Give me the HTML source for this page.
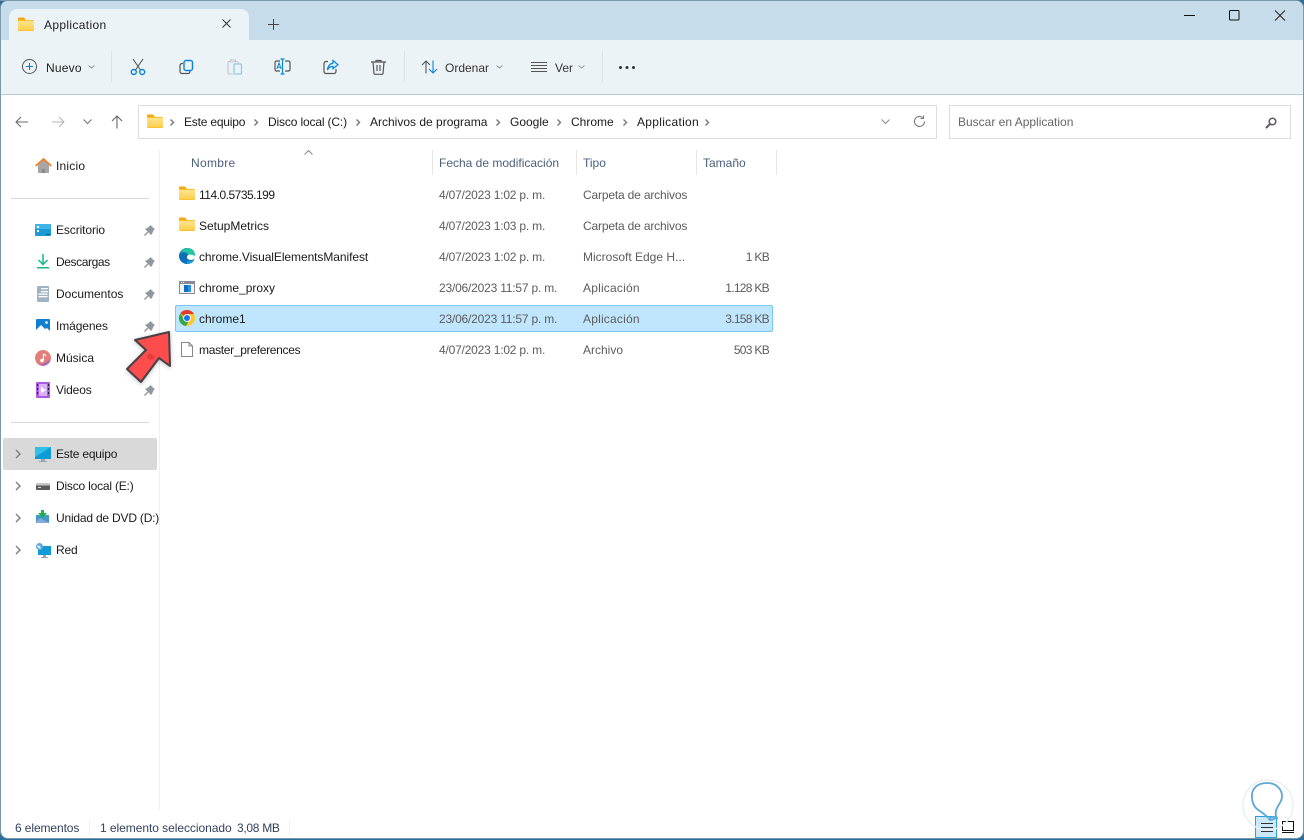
<!DOCTYPE html>
<html><head><meta charset="utf-8"><style>
html,body{margin:0;padding:0;width:1304px;height:840px;overflow:hidden;background:#fff}
body{font-family:"Liberation Sans",sans-serif;font-size:12px;color:#1a1a1a;position:relative}
.t{position:absolute;white-space:nowrap;line-height:16px;height:16px}
.g{color:#5c5c5c}
.r{text-align:right}
.a{position:absolute}
svg{position:absolute;overflow:visible}
</style></head><body>
<svg width="0" height="0" style="position:absolute"><defs>
<linearGradient id="fg" x1="0" y1="0" x2="0" y2="1"><stop offset="0" stop-color="#fee38d"/><stop offset="1" stop-color="#fdd050"/></linearGradient>
<g id="fold"><path d="M0 2a1.500 1.500 0 0 1 1.500-1.500H6l2 2.500v2H0z" fill="#f5a70f"/><rect x="0" y="3" width="16" height="11" rx="1" fill="#fbc02d"/><rect x="0" y="4" width="16" height="9" fill="url(#fg)"/></g>
<path id="pin" d="M6.500 0L11 4.500 9.600 5.300 8 9 7 10 4.600 7.400 1 11 0 10 3.600 6.400 1 4 4.800 2z" fill="#90989e"/>
<path id="chev" d="M1 1l4 4-4 4" fill="none" stroke="#7d7d7d" stroke-width="1.400"/>
<path id="bc" d="M0.500 0.500L3.500 3.500 0.500 6.500" fill="none" stroke="#777" stroke-width="1.400"/>
<path id="dn" d="M0.500 0.500L3.500 3 6.500 0.500" fill="none" stroke="#9a9a9a" stroke-width="1"/>
</defs></svg>

<!-- window frame -->
<div class="a" style="left:0;top:0;width:1304px;height:840px;background:#2a6f9c"></div>
<div class="a" style="left:0;top:0;width:860px;height:1px;background:#7d97a9"></div>
<div class="a" style="left:860px;top:0;width:210px;height:1px;background:#0a86c6"></div>
<div class="a" style="left:0;top:0;width:1304px;height:839px;background:#fff;border-radius:8px;border:1px solid #7b97aa;box-sizing:border-box"></div>

<!-- title bar + toolbar -->
<div class="a" style="left:1px;top:1px;width:1302px;height:39px;background:#c7dcea;border-radius:7px 7px 0 0"></div>
<div class="a" style="left:1px;top:40px;width:1302px;height:54px;background:#ecf3f7;border-bottom:1px solid #b4cbdc"></div>
<div class="a" style="left:9px;top:9px;width:240px;height:32px;background:#ecf3f7;border-radius:8px 8px 0 0"></div>
<svg style="left:18px;top:17px" width="16" height="14"><use href="#fold"/></svg>
<div class="t" style="left:44px;top:17px;color:#222;letter-spacing:.35px">Application</div>
<svg style="left:222px;top:19px" width="10" height="10"><path d="M0.500 0.500l8 8M8.500 0.500l-8 8" stroke="#333" stroke-width="1"/></svg>
<svg style="left:268px;top:19px" width="11" height="11"><path d="M5.500 0v11M0 5.500h11" stroke="#444" stroke-width="1"/></svg>

<svg style="left:1184px;top:10px" width="110" height="16"><path d="M0 5.500h11" stroke="#111" stroke-width="1"/><rect x="45.500" y="0.500" width="9.500" height="9.500" rx="1" fill="none" stroke="#111" stroke-width="1"/><path d="M91 .5l10 10M101 .5l-10 10" stroke="#222" stroke-width="1"/></svg>

<!-- toolbar items -->
<svg style="left:22px;top:59px" width="16" height="16"><circle cx="7.500" cy="7.500" r="7" fill="none" stroke="#555" stroke-width="1"/><path d="M7.500 4v7M4 7.500h7" stroke="#0a78d4" stroke-width="1"/></svg>
<div class="t" style="left:46px;top:60px;color:#222;letter-spacing:.2px">Nuevo</div>
<svg style="left:88px;top:65px" width="7" height="5"><use href="#dn"/></svg>
<div class="a" style="left:111px;top:51px;width:1px;height:31px;background:#dde3e7"></div>
<svg style="left:130px;top:58px" width="16" height="18"><path d="M3 1l7.500 11M13 1L5.500 12" stroke="#555" stroke-width="1.100" fill="none"/><circle cx="3.800" cy="14" r="2.500" fill="none" stroke="#0a84d8" stroke-width="1.400"/><circle cx="12.200" cy="14" r="2.500" fill="none" stroke="#0a84d8" stroke-width="1.400"/></svg>
<svg style="left:179px;top:60px" width="16" height="16"><path d="M4 3.500H3A2 2 0 0 0 1 5.500v6A2 2 0 0 0 3 13.500h6a2 2 0 0 0 2-2V11" fill="none" stroke="#555" stroke-width="1.200"/><rect x="5" y="0.500" width="8.500" height="10" rx="2" fill="none" stroke="#0a84d8" stroke-width="1.400"/></svg>
<svg style="left:227px;top:59px" width="16" height="16"><path d="M3 2.500H2a1 1 0 0 0-1 1V14a1 1 0 0 0 1 1h4" fill="none" stroke="#c2c6c9" stroke-width="1.100"/><path d="M3.500 1h5v2h-5z" fill="none" stroke="#c2c6c9"/><path d="M9 2.500h1a1 1 0 0 1 1 1V5" fill="none" stroke="#c2c6c9"/><rect x="7" y="5" width="7.500" height="10" rx="1" fill="none" stroke="#8fc6e8" stroke-width="1.200"/></svg>
<svg style="left:274px;top:58px" width="17" height="18"><path d="M6 3H2.500A1.500 1.500 0 0 0 1 4.500v7A1.500 1.500 0 0 0 2.500 13H6M11 3h3.500A1.500 1.500 0 0 1 16 4.500v7a1.500 1.500 0 0 1-1.500 1.500H11" fill="none" stroke="#555" stroke-width="1.200"/><path d="M8.500 1v15M6.500 1h4M6.500 16h4" stroke="#0a84d8" stroke-width="1.200" fill="none"/><path d="M2.800 11L5 5l2.200 6M3.600 9.200h2.800" stroke="#0a84d8" stroke-width="1" fill="none"/></svg>
<svg style="left:323px;top:60px" width="16" height="15"><path d="M5 1.500H3A2 2 0 0 0 1 3.500v8A2 2 0 0 0 3 13.500h8a2 2 0 0 0 2-2V9" fill="none" stroke="#555" stroke-width="1.200"/><path d="M10 0.500l5 4.200-5 4V6.500C7.500 6.500 5.500 7.500 4.500 10 4.500 6.500 7 3.500 10 3z" fill="#d8ebf8" stroke="#0a84d8" stroke-width="1.200"/></svg>
<svg style="left:371px;top:59px" width="15" height="16"><path d="M0 3h15M5 3V1.500h5V3M2 3l1 11.500a1 1 0 0 0 1 .8h7a1 1 0 0 0 1-.8L13 3M6 6v6M9 6v6" fill="none" stroke="#555" stroke-width="1.200"/></svg>
<div class="a" style="left:404px;top:51px;width:1px;height:31px;background:#dde3e7"></div>
<svg style="left:421px;top:60px" width="17" height="14"><path d="M5 13.500V1M1 5l4-4 4 4" fill="none" stroke="#555" stroke-width="1.100"/><path d="M12 0.500V13M8 9l4 4 4-4" fill="none" stroke="#0a84d8" stroke-width="1.100"/></svg>
<div class="t" style="left:445px;top:60px;color:#333">Ordenar</div>
<svg style="left:496px;top:65px" width="7" height="5"><use href="#dn"/></svg>
<svg style="left:531px;top:62px" width="16" height="10"><path d="M0 .5h16M0 3.500h16M0 6.500h16M0 9.500h16" stroke="#555" stroke-width="1"/></svg>
<div class="t" style="left:555px;top:60px;color:#333">Ver</div>
<svg style="left:578px;top:65px" width="7" height="5"><use href="#dn"/></svg>
<div class="a" style="left:602px;top:51px;width:1px;height:31px;background:#dde3e7"></div>
<svg style="left:619px;top:66px" width="16" height="3"><circle cx="1.500" cy="1.500" r="1.500" fill="#333"/><circle cx="8" cy="1.500" r="1.500" fill="#333"/><circle cx="14.500" cy="1.500" r="1.500" fill="#333"/></svg>

<!-- nav -->
<svg style="left:15px;top:116px" width="14" height="12"><path d="M13 6H1M6 1L1 6l5 5" fill="none" stroke="#6a6a6a" stroke-width="1.100"/></svg>
<svg style="left:51px;top:116px" width="14" height="12"><path d="M1 6h12M8 1l5 5-5 5" fill="none" stroke="#b4b4b4" stroke-width="1.100"/></svg>
<svg style="left:83px;top:119px" width="9" height="6"><path d="M.5 .5L4.500 4.500 8.500 .5" fill="none" stroke="#777" stroke-width="1.100"/></svg>
<svg style="left:111px;top:115px" width="12" height="14"><path d="M6 13.500V1M1 6l5-5 5 5" fill="none" stroke="#666" stroke-width="1.100"/></svg>

<!-- address -->
<div class="a" style="left:138px;top:105px;width:799px;height:34px;border:1px solid #dcdcdc;box-sizing:border-box;background:#fff"></div>
<svg style="left:147px;top:114px" width="16" height="14"><use href="#fold"/></svg>
<svg style="left:170px;top:119px" width="5" height="7"><use href="#bc"/></svg>
<div class="t" style="left:184px;top:114px;letter-spacing:-.2px">Este equipo</div>
<svg style="left:254px;top:119px" width="5" height="7"><use href="#bc"/></svg>
<div class="t" style="left:268px;top:114px;letter-spacing:-.15px">Disco local (C:)</div>
<svg style="left:356px;top:119px" width="5" height="7"><use href="#bc"/></svg>
<div class="t" style="left:370px;top:114px">Archivos de programa</div>
<svg style="left:496px;top:119px" width="5" height="7"><use href="#bc"/></svg>
<div class="t" style="left:510px;top:114px">Google</div>
<svg style="left:557px;top:119px" width="5" height="7"><use href="#bc"/></svg>
<div class="t" style="left:571px;top:114px">Chrome</div>
<svg style="left:623px;top:119px" width="5" height="7"><use href="#bc"/></svg>
<div class="t" style="left:637px;top:114px;letter-spacing:.3px">Application</div>
<svg style="left:705px;top:119px" width="5" height="7"><use href="#bc"/></svg>
<svg style="left:881px;top:119px" width="9" height="6"><path d="M.5 .5L4.500 4.500 8.500 .5" fill="none" stroke="#8a8a8a" stroke-width="1"/></svg>
<svg style="left:913px;top:115px" width="13" height="13"><path d="M11.500 6.500a5 5 0 1 1-1.800-3.900" fill="none" stroke="#7d7d7d" stroke-width="1.100"/><path d="M10.500 0.500v3h-3" fill="none" stroke="#7d7d7d" stroke-width="1.100"/></svg>

<!-- search -->
<div class="a" style="left:949px;top:105px;width:342px;height:34px;border:1px solid #dcdcdc;box-sizing:border-box;background:#fff"></div>
<div class="t" style="left:958px;top:114px;color:#666">Buscar en Application</div>
<svg style="left:1265px;top:117px" width="12" height="12"><circle cx="7.500" cy="4.500" r="3.300" fill="none" stroke="#5e5a60" stroke-width="1.500"/><path d="M5 7L1 11" stroke="#5e5a60" stroke-width="2"/></svg>

<!-- sidebar -->
<svg style="left:35px;top:158px" width="17" height="16"><path d="M3 7v8h11V7L8.500 2z" fill="#a6a6a6"/><path d="M7 15v-4h3v4z" fill="#8a8a8a"/><path d="M.7 8L8.500 1 16.300 8" fill="none" stroke="#f27a1a" stroke-width="1.600"/></svg>
<div class="t" style="left:56px;top:158px;letter-spacing:.2px">Inicio</div>
<div class="a" style="left:11px;top:198px;width:138px;height:1px;background:#d9d9d9"></div>

<svg style="left:35px;top:224px" width="16" height="12"><rect width="16" height="12" rx="1" fill="#1b9ad6"/><rect x="0" y="0" width="16" height="5" fill="#3fb4e6"/><rect x="2" y="2" width="2" height="2" fill="#fff"/><rect x="2" y="6" width="2" height="2" fill="#fff"/><rect x="11" y="10" width="4" height="1" fill="#0b5f8f"/></svg>
<div class="t" style="left:56px;top:222px;letter-spacing:-.1px">Escritorio</div>
<svg style="left:144px;top:225px" width="11" height="11"><use href="#pin"/></svg>

<svg style="left:37px;top:254px" width="12" height="15"><path d="M6 0v10M1.500 6L6 10.500 10.500 6" fill="none" stroke="#12b886" stroke-width="1.500"/><rect x="0" y="13" width="12" height="1.500" fill="#12b886"/></svg>
<div class="t" style="left:56px;top:254px;letter-spacing:-.4px">Descargas</div>
<svg style="left:144px;top:257px" width="11" height="11"><use href="#pin"/></svg>

<svg style="left:37px;top:286px" width="12" height="16"><rect width="12" height="16" rx="1" fill="#9fb3c4"/><rect x="4" y="2" width="7" height="1.300" fill="#fff"/><rect x="4" y="5" width="7" height="1.300" fill="#fff"/><rect x="1.500" y="7.500" width="9" height="1.300" fill="#fff"/><rect x="1.500" y="10" width="9" height="1.300" fill="#fff"/></svg>
<div class="t" style="left:56px;top:286px">Documentos</div>
<svg style="left:144px;top:289px" width="11" height="11"><use href="#pin"/></svg>

<svg style="left:36px;top:319px" width="14" height="14"><rect width="14" height="14" rx="1" fill="#0f7fd0"/><path d="M0 11l5-5 4 4 2-1 3 3v2H0z" fill="#fff"/><circle cx="10.500" cy="3.500" r="1.300" fill="#fff"/></svg>
<div class="t" style="left:56px;top:318px;letter-spacing:-.1px">Imágenes</div>
<svg style="left:144px;top:321px" width="11" height="11"><use href="#pin"/></svg>

<svg style="left:35px;top:350px" width="16" height="16"><circle cx="8" cy="8" r="8" fill="#e27f79"/><path d="M4 14.500Q9 14 15 9.500 15 13 11 15 7 16.500 4 14.500z" fill="#a66bc0"/><path d="M8.500 4v6" stroke="#fff" stroke-width="1.200"/><circle cx="7" cy="10.500" r="1.800" fill="#fff"/><path d="M8.500 4q2 .5 2.500 2" stroke="#fff" fill="none"/></svg>
<div class="t" style="left:56px;top:350px">Música</div>

<svg style="left:36px;top:382px" width="14" height="16"><rect width="14" height="16" rx="1" fill="#a85ce0"/><rect x="3" y="2" width="8" height="12" fill="#d9b3f5"/><path d="M5 5l5 3-5 3z" fill="#fff"/><rect x="1" y="2" width="1" height="2" fill="#2b1247"/><rect x="1" y="6" width="1" height="2" fill="#2b1247"/><rect x="1" y="10" width="1" height="2" fill="#2b1247"/><rect x="12" y="2" width="1" height="2" fill="#2b1247"/><rect x="12" y="6" width="1" height="2" fill="#2b1247"/><rect x="12" y="10" width="1" height="2" fill="#2b1247"/></svg>
<div class="t" style="left:56px;top:382px;letter-spacing:-.15px">Videos</div>
<svg style="left:144px;top:385px" width="11" height="11"><use href="#pin"/></svg>

<div class="a" style="left:11px;top:422px;width:138px;height:1px;background:#d9d9d9"></div>
<div class="a" style="left:3px;top:438px;width:154px;height:32px;background:#d9d9d9;border-radius:2px"></div>
<svg style="left:15px;top:449px" width="6" height="10"><use href="#chev"/></svg>
<svg style="left:35px;top:447px" width="16" height="16"><rect width="16" height="12" fill="#0f9bd7"/><path d="M0 0h16L0 10z" fill="#31c0e8"/><rect x="6" y="12" width="4" height="2" fill="#9aa5ad"/><rect x="4" y="14" width="8" height="1" fill="#9aa5ad"/></svg>
<div class="t" style="left:56px;top:446px;letter-spacing:-.2px">Este equipo</div>

<svg style="left:15px;top:481px" width="6" height="10"><use href="#chev"/></svg>
<svg style="left:36px;top:483px" width="14" height="7"><rect y="1" width="14" height="6" rx="1" fill="#5b5b5b"/><rect y="0" width="14" height="2.500" rx="1" fill="#c7c7c7"/><rect x="2" y="4" width="3" height="1" fill="#ddd"/></svg>
<div class="t" style="left:56px;top:478px;letter-spacing:-.2px">Disco local (E:)</div>

<svg style="left:15px;top:513px" width="6" height="10"><use href="#chev"/></svg>
<svg style="left:36px;top:510px" width="13" height="14"><path d="M0 5h13v8H0z" fill="#3f9cc9"/><path d="M0 12l4-4 9 5H0z" fill="#8ad"/><path d="M5 0h3v3h3L6.500 8 2 3h3z" fill="#21b14b"/></svg>
<div class="t" style="left:56px;top:510px;letter-spacing:-.2px">Unidad de DVD (D:)</div>

<svg style="left:15px;top:545px" width="6" height="10"><use href="#chev"/></svg>
<svg style="left:35px;top:543px" width="16" height="15"><rect x="3" y="3" width="13" height="9" fill="#0f9bd7"/><rect x="8" y="12" width="3" height="2" fill="#9aa5ad"/><rect x="6" y="14" width="7" height="1" fill="#9aa5ad"/><circle cx="4.500" cy="3.500" r="3.500" fill="#5aa9d9"/><path d="M2 2l3 1 1 3-3-1z" fill="#d8eef8"/></svg>
<div class="t" style="left:56px;top:542px;letter-spacing:-.2px">Red</div>

<div class="a" style="left:159px;top:150px;width:1px;height:660px;background:#f0f0f0"></div>

<!-- column headers -->
<svg style="left:304px;top:150px" width="9" height="5"><path d="M.5 4.500L4.500 .5 8.500 4.500" fill="none" stroke="#8a8a8a" stroke-width="1"/></svg>
<div class="t" style="left:191px;top:155px;color:#4c607a;letter-spacing:.3px">Nombre</div>
<div class="a" style="left:432px;top:150px;width:1px;height:25px;background:#e5e5e5"></div>
<div class="t" style="left:439px;top:155px;color:#4c607a">Fecha de modificación</div>
<div class="a" style="left:576px;top:150px;width:1px;height:25px;background:#e5e5e5"></div>
<div class="t" style="left:583px;top:155px;color:#4c607a">Tipo</div>
<div class="a" style="left:696px;top:150px;width:1px;height:25px;background:#e5e5e5"></div>
<div class="t" style="left:703px;top:155px;color:#4c607a">Tamaño</div>
<div class="a" style="left:776px;top:150px;width:1px;height:25px;background:#e5e5e5"></div>

<!-- selected row -->
<div class="a" style="left:175px;top:305px;width:598px;height:27px;background:#bfe6fc;border:1px solid #78c8f5;box-sizing:border-box;border-radius:2px"></div>

<!-- rows -->
<svg style="left:179px;top:186px" width="16" height="14"><use href="#fold"/></svg>
<div class="t" style="left:199px;top:187px;letter-spacing:-.5px">114.0.5735.199</div>
<div class="t g" style="left:439px;top:187px;letter-spacing:-.2px">4/07/2023 1:02 p. m.</div>
<div class="t g" style="left:583px;top:187px;letter-spacing:-.17px">Carpeta de archivos</div>

<svg style="left:179px;top:217px" width="16" height="14"><use href="#fold"/></svg>
<div class="t" style="left:199px;top:218px">SetupMetrics</div>
<div class="t g" style="left:439px;top:218px;letter-spacing:-.2px">4/07/2023 1:03 p. m.</div>
<div class="t g" style="left:583px;top:218px;letter-spacing:-.17px">Carpeta de archivos</div>

<svg style="left:179px;top:248px" width="16" height="16"><circle cx="8" cy="8" r="8" fill="#0c6fb8"/><path d="M1 6C2 2 6 0 9 0c4 0 7 3 7 7 0 2-2 3-4 3H8c0-2 1-2 1-3S7 4 5 4 2 5 1 6z" fill="#27c4a0"/><path d="M8 9c0-2 3-3 5-2 2 0 3 1 3 2 0 1-1 3-4 3-2 0-4-1-4-3z" fill="#fff"/><path d="M8 16c3 0 6-1 7-4-2 1-6 2-7 0z" fill="#1c9be0"/></svg>
<div class="t" style="left:199px;top:249px;letter-spacing:-.07px">chrome.VisualElementsManifest</div>
<div class="t g" style="left:439px;top:249px;letter-spacing:-.2px">4/07/2023 1:02 p. m.</div>
<div class="t g" style="left:583px;top:249px">Microsoft Edge H...</div>
<div class="t g r" style="left:700px;top:249px;width:69px;letter-spacing:-.7px">1 KB</div>

<svg style="left:179px;top:281px" width="16" height="13"><rect width="16" height="13" fill="#8a8a94"/><rect x="1" y="3" width="14" height="9" fill="#f2f4f6"/><rect x="5" y="4" width="6" height="7" fill="#0f6fc6"/><rect x="9" y="4" width="3" height="7" fill="#2a93e0"/><rect x="2" y="1" width="1" height="1" fill="#fff"/><rect x="4" y="1" width="1" height="1" fill="#fff"/></svg>
<div class="t" style="left:199px;top:280px">chrome_proxy</div>
<div class="t g" style="left:439px;top:280px;letter-spacing:-.2px">23/06/2023 11:57 p. m.</div>
<div class="t g" style="left:583px;top:280px;letter-spacing:.2px">Aplicación</div>
<div class="t g r" style="left:700px;top:280px;width:69px;letter-spacing:-.7px">1.128 KB</div>

<svg style="left:179px;top:310px" width="16" height="16"><circle cx="8" cy="8" r="8" fill="#fcc934"/><path d="M8 0a8 8 0 0 1 6.900 4H8a4 4 0 0 0-3.500 2L1.500 3A8 8 0 0 1 8 0z" fill="#e33b2e"/><path d="M1.500 3.200L5 9.500A4 4 0 0 0 9.200 12L7 16A8 8 0 0 1 1.500 3.200z" fill="#2fa84f"/><circle cx="8" cy="8" r="3.900" fill="#fff"/><circle cx="8" cy="8" r="3" fill="#1a73e8"/></svg>
<div class="t" style="left:199px;top:311px">chrome1</div>
<div class="t g" style="left:439px;top:311px;letter-spacing:-.2px">23/06/2023 11:57 p. m.</div>
<div class="t g" style="left:583px;top:311px;letter-spacing:.2px">Aplicación</div>
<div class="t g r" style="left:700px;top:311px;width:69px;letter-spacing:-.7px">3.158 KB</div>

<svg style="left:181px;top:342px" width="12" height="15"><path d="M.5 .5h7.500l3.500 3.500v10.500H.5z" fill="#fff" stroke="#8d8388"/><path d="M8 .5V4h3.500" fill="none" stroke="#8d8388"/></svg>
<div class="t" style="left:199px;top:342px;letter-spacing:-.3px">master_preferences</div>
<div class="t g" style="left:439px;top:342px;letter-spacing:-.2px">4/07/2023 1:02 p. m.</div>
<div class="t g" style="left:583px;top:342px">Archivo</div>
<div class="t g r" style="left:700px;top:342px;width:69px;letter-spacing:-.7px">503 KB</div>

<!-- status bar -->
<div class="t" style="left:15px;top:820px;color:#33415c;letter-spacing:-.1px">6 elementos</div>
<div class="a" style="left:89px;top:821px;width:1px;height:14px;background:#eee"></div>
<div class="t" style="left:100px;top:820px;color:#33415c;letter-spacing:-.05px">1 elemento seleccionado</div>
<div class="t" style="left:237px;top:820px;color:#33415c;letter-spacing:-.3px">3,08 MB</div>
<div class="a" style="left:289px;top:821px;width:1px;height:14px;background:#eee"></div>

<!-- red arrow -->
<svg style="left:0;top:0;filter:drop-shadow(0 1px 2px rgba(0,0,0,.25))" width="1304" height="840"><path d="M169 332L170 366 159 358 141 382 127 369 146 350 135 340z" fill="#ff4c4c" stroke="#454045" stroke-width="2" stroke-linejoin="round"/><path d="M147 356l3-3 3 3 2-1-1 4-4 1-1-2-2 1z" fill="#e8393e"/></svg>

<!-- status buttons + watermark -->
<div class="a" style="left:1255px;top:816px;width:22px;height:22px;background:#cde8f8;border:1px solid #27a0de;box-sizing:border-box"></div>
<svg style="left:1261px;top:823px" width="12" height="9"><path d="M0 .5h12M0 4.500h12M0 8.500h12" stroke="#333" stroke-width="1"/></svg>
<svg style="left:1282px;top:821px" width="12" height="12"><path d="M.5 .5h11v9H.5zM0 11.500h12" fill="none" stroke="#111" stroke-width="1"/></svg>
<svg style="left:0;top:0" width="1304" height="840"><circle cx="1268" cy="805" r="25" fill="none" stroke="#e9f0f4" stroke-width="1.500"/><path d="M1268 818C1262 810 1253 811 1252 798 1251 788 1258 783 1267 783 1277 783 1282 790 1282 796 1282 803 1277 805 1276 811 1275 815 1277 816 1275 818 1272 821 1267 820 1270 818 1273 816 1278 817 1277 819" fill="none" stroke="#5aa8d6" stroke-width="1.800"/></svg>
</body></html>
